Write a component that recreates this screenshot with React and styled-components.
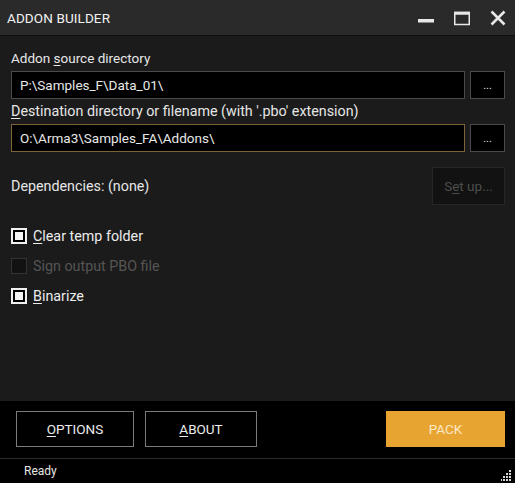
import React from 'react';
import styled, { createGlobalStyle } from 'styled-components';

const GlobalStyle = createGlobalStyle`
  html, body {
    margin: 0;
    padding: 0;
    background: #000;
  }
  * {
    box-sizing: border-box;
  }
`;

const Window = styled.div`
  width: 515px;
  height: 483px;
  display: flex;
  flex-direction: column;
  background: #1b1b1b;
  color: #e6e6e6;
  font-family: Roboto, "Liberation Sans", sans-serif;
  font-size: 13px;
  overflow: hidden;
`;

const TitleBar = styled.div`
  height: 36px;
  flex-shrink: 0;
  display: flex;
  align-items: center;
  justify-content: space-between;
  background: #2a2a2a;
  border-bottom: 1px solid #0e0e0e;
  padding-left: 7px;
`;

const Title = styled.div`
  font-size: 13.5px;
  color: #f2f2f2;
  letter-spacing: 0.1px;
`;

const WindowButtons = styled.div`
  display: grid;
  grid-template-columns: repeat(3, 36px);
  height: 100%;
  margin-right: -1px;
`;

const WindowButton = styled.div`
  display: flex;
  align-items: center;
  justify-content: center;
  color: #e8e8e8;
`;

const Body = styled.div`
  flex: 1;
  display: flex;
  flex-direction: column;
  padding: 13px 10px 0 11px;
`;

const Label = styled.div`
  height: 18px;
  line-height: 18px;
  font-size: ${p => p.$size || 13.5}px;
  color: #e6e6e6;
  white-space: nowrap;
`;

const FieldRow = styled.div`
  display: flex;
  gap: 5px;
  margin: 4px 0 3px;
`;

const TextField = styled.div`
  flex: 1;
  height: 28px;
  display: flex;
  align-items: center;
  padding-left: 8px;
  background: #000;
  border: 1px solid ${p => (p.$focused ? '#7a6438' : '#4a4a4a')};
  color: #e8e8e8;
  font-size: 13.5px;
`;

const BrowseButton = styled.div`
  width: 35px;
  height: 28px;
  display: flex;
  align-items: flex-end;
  justify-content: center;
  padding-bottom: 7px;
  background: #000;
  border: 1px solid #4a4a4a;
  color: #e0e0e0;
  font-size: 11px;
  line-height: 1;
`;

const DepsRow = styled.div`
  display: flex;
  align-items: center;
  justify-content: space-between;
  margin-top: 12px;
`;

const SetupButton = styled.div`
  width: 73px;
  height: 38px;
  display: flex;
  align-items: center;
  justify-content: center;
  background: #121212;
  border: 1px solid #262626;
  color: #4e4e4e;
  font-size: 13.5px;
`;

const Options = styled.div`
  display: flex;
  flex-direction: column;
  margin-top: 16px;
`;

const CheckRow = styled.div`
  height: 30px;
  display: flex;
  align-items: center;
  gap: 6px;
  font-size: 14.3px;
  color: ${p => (p.$disabled ? '#555' : '#ececec')};
`;

const Box = styled.div`
  width: 16px;
  height: 16px;
  display: flex;
  align-items: center;
  justify-content: center;
  border: ${p => (p.$disabled ? '1px solid #333' : '2px solid #f0f0f0')};
  background: ${p => (p.$disabled ? '#121212' : '#000')};

  &::after {
    content: '';
    display: ${p => (p.$checked ? 'block' : 'none')};
    width: 8px;
    height: 8px;
    background: #f4f4f4;
  }
`;

const Key = styled.span`
  text-decoration: underline;
  text-underline-offset: 2px;
`;

const Footer = styled.div`
  height: 57px;
  flex-shrink: 0;
  display: flex;
  align-items: flex-start;
  gap: 11px;
  padding: 10px 10px 0 16px;
  background: #000;
`;

const FooterButton = styled.div`
  width: ${p => p.$width}px;
  height: 36px;
  display: flex;
  align-items: center;
  justify-content: center;
  font-size: 13.5px;
  color: ${p => (p.$primary ? '#fbe8c6' : '#ececec')};
  background: ${p => (p.$primary ? '#e8a431' : '#000')};
  border: 1px solid ${p => (p.$primary ? '#e8a431' : '#7c7c7c')};
  margin-left: ${p => (p.$push ? 'auto' : '0')};
`;

const StatusBar = styled.div`
  height: 25px;
  flex-shrink: 0;
  display: flex;
  align-items: center;
  justify-content: space-between;
  padding-left: 24px;
  background: #000;
  border-top: 1px solid #2c2c2c;
  font-size: 12px;
  color: #e6e6e6;
`;

const Grip = styled.svg`
  align-self: flex-end;
  margin: 0 3px 2px 0;
`;

const MinimizeIcon = () => (
  <svg width="16" height="16" viewBox="0 0 16 16">
    <rect x="0" y="9" width="16" height="3.5" fill="currentColor" />
  </svg>
);

const MaximizeIcon = () => (
  <svg width="16" height="16" viewBox="0 0 16 16">
    <rect x="0.75" y="2.5" width="14.5" height="12" fill="none" stroke="currentColor" strokeWidth="1.5" />
    <rect x="0" y="1.75" width="16" height="3" fill="currentColor" />
  </svg>
);

const CloseIcon = () => (
  <svg width="16" height="16" viewBox="0 0 16 16">
    <path d="M1.5 1.5 L14.5 14.5 M14.5 1.5 L1.5 14.5" stroke="currentColor" strokeWidth="2.6" strokeLinecap="butt" />
  </svg>
);

const GripIcon = () => (
  <Grip width="11" height="11" viewBox="0 0 11 11">
    {[[8, 0], [8, 3], [5, 3], [8, 6], [5, 6], [2, 6], [8, 9], [5, 9], [2, 9], [-1, 9]].map(([x, y], i) => (
      <rect key={i} x={x} y={y} width="2" height="2" fill="#d8d8d8" />
    ))}
  </Grip>
);

const checks = [
  { key: 'C', rest: 'lear temp folder', checked: true },
  { key: '', rest: 'Sign output PBO file', disabled: true },
  { key: 'B', rest: 'inarize', checked: true },
];

export default function App() {
  return (
    <>
      <GlobalStyle />
      <Window>
        <TitleBar>
          <Title>ADDON BUILDER</Title>
          <WindowButtons>
            <WindowButton><MinimizeIcon /></WindowButton>
            <WindowButton><MaximizeIcon /></WindowButton>
            <WindowButton><CloseIcon /></WindowButton>
          </WindowButtons>
        </TitleBar>

        <Body>
          <Label>Addon <Key>s</Key>ource directory</Label>
          <FieldRow>
            <TextField>P:\Samples_F\Data_01\</TextField>
            <BrowseButton>...</BrowseButton>
          </FieldRow>
          <Label $size={14.3}><Key>D</Key>estination directory or filename (with '.pbo' extension)</Label>
          <FieldRow>
            <TextField $focused>O:\Arma3\Samples_FA\Addons\</TextField>
            <BrowseButton>...</BrowseButton>
          </FieldRow>

          <DepsRow>
            <Label $size={14.3}>Dependencies: (none)</Label>
            <SetupButton>S<Key>e</Key>t up...</SetupButton>
          </DepsRow>

          <Options>
            {checks.map(c => (
              <CheckRow key={c.rest} $disabled={c.disabled}>
                <Box $checked={c.checked} $disabled={c.disabled} />
                <span>{c.key && <Key>{c.key}</Key>}{c.rest}</span>
              </CheckRow>
            ))}
          </Options>
        </Body>

        <Footer>
          <FooterButton $width={118}><Key>O</Key>PTIONS</FooterButton>
          <FooterButton $width={112}><Key>A</Key>BOUT</FooterButton>
          <FooterButton $width={119} $primary $push>PACK</FooterButton>
        </Footer>

        <StatusBar>
          <span>Ready</span>
          <GripIcon />
        </StatusBar>
      </Window>
    </>
  );
}
